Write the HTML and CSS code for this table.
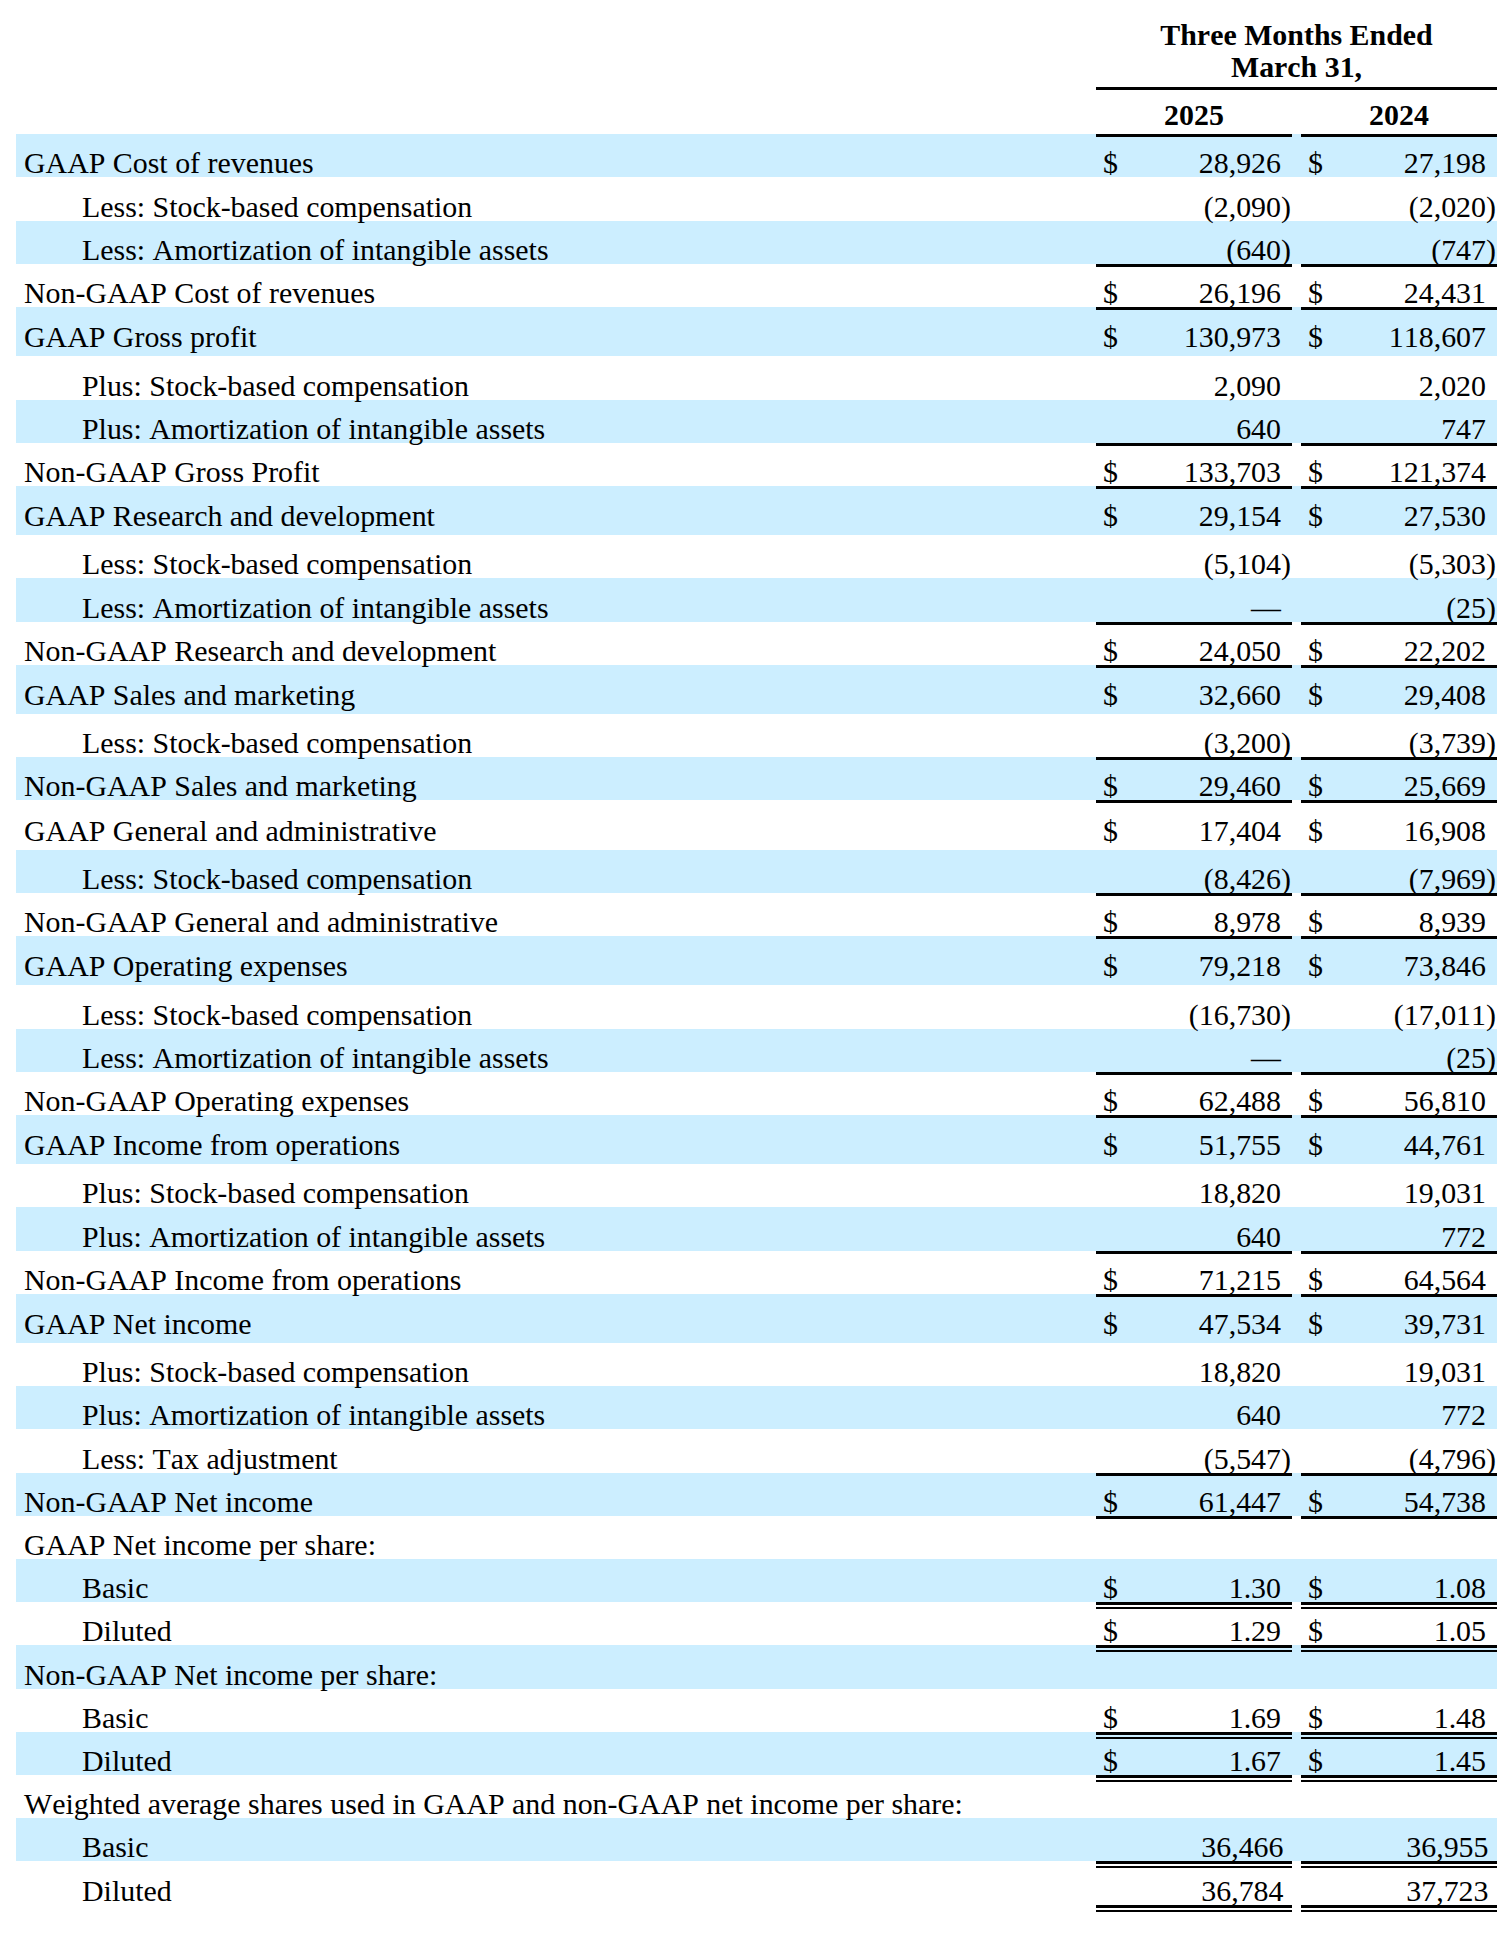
FILE: index.html
```html
<!DOCTYPE html>
<html lang="en">
<head>
<meta charset="utf-8">
<title>Non-GAAP Reconciliation</title>
<link rel="stylesheet" href="styles.css">
</head>
<body>
<div class="sheet">
  <div class="head">
    <div class="title">Three Months Ended<br>March 31,</div>
  </div>
  <div class="years">
    <div></div>
    <div class="yr">2025</div>
    <div class="yr">2024</div>
  </div>

  <div class="row alt">
    <div class="lbl">GAAP Cost of revenues</div>
    <div class="n t"><span class="c">$</span><span class="v">28,926</span><span class="p"></span></div>
    <div class="n t"><span class="c">$</span><span class="v">27,198</span><span class="p"></span></div>
  </div>
  <div class="row">
    <div class="lbl ind">Less: Stock-based compensation</div>
    <div class="n"><span class="c"></span><span class="v">(2,090</span><span class="p">)</span></div>
    <div class="n"><span class="c"></span><span class="v">(2,020</span><span class="p">)</span></div>
  </div>
  <div class="row alt">
    <div class="lbl ind">Less: Amortization of intangible assets</div>
    <div class="n"><span class="c"></span><span class="v">(640</span><span class="p">)</span></div>
    <div class="n"><span class="c"></span><span class="v">(747</span><span class="p">)</span></div>
  </div>
  <div class="row">
    <div class="lbl">Non-GAAP Cost of revenues</div>
    <div class="n t"><span class="c">$</span><span class="v">26,196</span><span class="p"></span></div>
    <div class="n t"><span class="c">$</span><span class="v">24,431</span><span class="p"></span></div>
  </div>

  <div class="row alt tall">
    <div class="lbl">GAAP Gross profit</div>
    <div class="n t"><span class="c">$</span><span class="v">130,973</span><span class="p"></span></div>
    <div class="n t"><span class="c">$</span><span class="v">118,607</span><span class="p"></span></div>
  </div>
  <div class="row">
    <div class="lbl ind">Plus: Stock-based compensation</div>
    <div class="n"><span class="c"></span><span class="v">2,090</span><span class="p"></span></div>
    <div class="n"><span class="c"></span><span class="v">2,020</span><span class="p"></span></div>
  </div>
  <div class="row alt">
    <div class="lbl ind">Plus: Amortization of intangible assets</div>
    <div class="n"><span class="c"></span><span class="v">640</span><span class="p"></span></div>
    <div class="n"><span class="c"></span><span class="v">747</span><span class="p"></span></div>
  </div>
  <div class="row">
    <div class="lbl">Non-GAAP Gross Profit</div>
    <div class="n t"><span class="c">$</span><span class="v">133,703</span><span class="p"></span></div>
    <div class="n t"><span class="c">$</span><span class="v">121,374</span><span class="p"></span></div>
  </div>

  <div class="row alt tall">
    <div class="lbl">GAAP Research and development</div>
    <div class="n t"><span class="c">$</span><span class="v">29,154</span><span class="p"></span></div>
    <div class="n t"><span class="c">$</span><span class="v">27,530</span><span class="p"></span></div>
  </div>
  <div class="row">
    <div class="lbl ind">Less: Stock-based compensation</div>
    <div class="n"><span class="c"></span><span class="v">(5,104</span><span class="p">)</span></div>
    <div class="n"><span class="c"></span><span class="v">(5,303</span><span class="p">)</span></div>
  </div>
  <div class="row alt">
    <div class="lbl ind">Less: Amortization of intangible assets</div>
    <div class="n"><span class="c"></span><span class="v">&mdash;</span><span class="p"></span></div>
    <div class="n"><span class="c"></span><span class="v">(25</span><span class="p">)</span></div>
  </div>
  <div class="row">
    <div class="lbl">Non-GAAP Research and development</div>
    <div class="n t"><span class="c">$</span><span class="v">24,050</span><span class="p"></span></div>
    <div class="n t"><span class="c">$</span><span class="v">22,202</span><span class="p"></span></div>
  </div>

  <div class="row alt tall">
    <div class="lbl">GAAP Sales and marketing</div>
    <div class="n t"><span class="c">$</span><span class="v">32,660</span><span class="p"></span></div>
    <div class="n t"><span class="c">$</span><span class="v">29,408</span><span class="p"></span></div>
  </div>
  <div class="row">
    <div class="lbl ind">Less: Stock-based compensation</div>
    <div class="n"><span class="c"></span><span class="v">(3,200</span><span class="p">)</span></div>
    <div class="n"><span class="c"></span><span class="v">(3,739</span><span class="p">)</span></div>
  </div>
  <div class="row alt">
    <div class="lbl">Non-GAAP Sales and marketing</div>
    <div class="n t"><span class="c">$</span><span class="v">29,460</span><span class="p"></span></div>
    <div class="n t"><span class="c">$</span><span class="v">25,669</span><span class="p"></span></div>
  </div>

  <div class="row tall">
    <div class="lbl">GAAP General and administrative</div>
    <div class="n t"><span class="c">$</span><span class="v">17,404</span><span class="p"></span></div>
    <div class="n t"><span class="c">$</span><span class="v">16,908</span><span class="p"></span></div>
  </div>
  <div class="row alt">
    <div class="lbl ind">Less: Stock-based compensation</div>
    <div class="n"><span class="c"></span><span class="v">(8,426</span><span class="p">)</span></div>
    <div class="n"><span class="c"></span><span class="v">(7,969</span><span class="p">)</span></div>
  </div>
  <div class="row">
    <div class="lbl">Non-GAAP General and administrative</div>
    <div class="n t"><span class="c">$</span><span class="v">8,978</span><span class="p"></span></div>
    <div class="n t"><span class="c">$</span><span class="v">8,939</span><span class="p"></span></div>
  </div>

  <div class="row alt tall">
    <div class="lbl">GAAP Operating expenses</div>
    <div class="n t"><span class="c">$</span><span class="v">79,218</span><span class="p"></span></div>
    <div class="n t"><span class="c">$</span><span class="v">73,846</span><span class="p"></span></div>
  </div>
  <div class="row">
    <div class="lbl ind">Less: Stock-based compensation</div>
    <div class="n"><span class="c"></span><span class="v">(16,730</span><span class="p">)</span></div>
    <div class="n"><span class="c"></span><span class="v">(17,011</span><span class="p">)</span></div>
  </div>
  <div class="row alt">
    <div class="lbl ind">Less: Amortization of intangible assets</div>
    <div class="n"><span class="c"></span><span class="v">&mdash;</span><span class="p"></span></div>
    <div class="n"><span class="c"></span><span class="v">(25</span><span class="p">)</span></div>
  </div>
  <div class="row">
    <div class="lbl">Non-GAAP Operating expenses</div>
    <div class="n t"><span class="c">$</span><span class="v">62,488</span><span class="p"></span></div>
    <div class="n t"><span class="c">$</span><span class="v">56,810</span><span class="p"></span></div>
  </div>

  <div class="row alt tall">
    <div class="lbl">GAAP Income from operations</div>
    <div class="n t"><span class="c">$</span><span class="v">51,755</span><span class="p"></span></div>
    <div class="n t"><span class="c">$</span><span class="v">44,761</span><span class="p"></span></div>
  </div>
  <div class="row">
    <div class="lbl ind">Plus: Stock-based compensation</div>
    <div class="n"><span class="c"></span><span class="v">18,820</span><span class="p"></span></div>
    <div class="n"><span class="c"></span><span class="v">19,031</span><span class="p"></span></div>
  </div>
  <div class="row alt">
    <div class="lbl ind">Plus: Amortization of intangible assets</div>
    <div class="n"><span class="c"></span><span class="v">640</span><span class="p"></span></div>
    <div class="n"><span class="c"></span><span class="v">772</span><span class="p"></span></div>
  </div>
  <div class="row">
    <div class="lbl">Non-GAAP Income from operations</div>
    <div class="n t"><span class="c">$</span><span class="v">71,215</span><span class="p"></span></div>
    <div class="n t"><span class="c">$</span><span class="v">64,564</span><span class="p"></span></div>
  </div>

  <div class="row alt tall">
    <div class="lbl">GAAP Net income</div>
    <div class="n t"><span class="c">$</span><span class="v">47,534</span><span class="p"></span></div>
    <div class="n t"><span class="c">$</span><span class="v">39,731</span><span class="p"></span></div>
  </div>
  <div class="row">
    <div class="lbl ind">Plus: Stock-based compensation</div>
    <div class="n"><span class="c"></span><span class="v">18,820</span><span class="p"></span></div>
    <div class="n"><span class="c"></span><span class="v">19,031</span><span class="p"></span></div>
  </div>
  <div class="row alt">
    <div class="lbl ind">Plus: Amortization of intangible assets</div>
    <div class="n"><span class="c"></span><span class="v">640</span><span class="p"></span></div>
    <div class="n"><span class="c"></span><span class="v">772</span><span class="p"></span></div>
  </div>
  <div class="row">
    <div class="lbl ind">Less: Tax adjustment</div>
    <div class="n"><span class="c"></span><span class="v">(5,547</span><span class="p">)</span></div>
    <div class="n"><span class="c"></span><span class="v">(4,796</span><span class="p">)</span></div>
  </div>
  <div class="row alt">
    <div class="lbl">Non-GAAP Net income</div>
    <div class="n t"><span class="c">$</span><span class="v">61,447</span><span class="p"></span></div>
    <div class="n t"><span class="c">$</span><span class="v">54,738</span><span class="p"></span></div>
  </div>

  <div class="row">
    <div class="lbl">GAAP Net income per share:</div>
    <div class="n t"></div>
    <div class="n t"></div>
  </div>
  <div class="row alt">
    <div class="lbl ind">Basic</div>
    <div class="n"><span class="c">$</span><span class="v">1.30</span><span class="p"></span></div>
    <div class="n"><span class="c">$</span><span class="v">1.08</span><span class="p"></span></div>
  </div>
  <div class="row">
    <div class="lbl ind">Diluted</div>
    <div class="n d"><span class="c">$</span><span class="v">1.29</span><span class="p"></span></div>
    <div class="n d"><span class="c">$</span><span class="v">1.05</span><span class="p"></span></div>
  </div>
  <div class="row alt">
    <div class="lbl">Non-GAAP Net income per share:</div>
    <div class="n d"></div>
    <div class="n d"></div>
  </div>
  <div class="row">
    <div class="lbl ind">Basic</div>
    <div class="n"><span class="c">$</span><span class="v">1.69</span><span class="p"></span></div>
    <div class="n"><span class="c">$</span><span class="v">1.48</span><span class="p"></span></div>
  </div>
  <div class="row alt">
    <div class="lbl ind">Diluted</div>
    <div class="n d"><span class="c">$</span><span class="v">1.67</span><span class="p"></span></div>
    <div class="n d"><span class="c">$</span><span class="v">1.45</span><span class="p"></span></div>
  </div>
  <div class="row">
    <div class="lbl">Weighted average shares used in GAAP and non-GAAP net income per share:</div>
    <div class="n d"></div>
    <div class="n d"></div>
  </div>
  <div class="row alt">
    <div class="lbl ind">Basic</div>
    <div class="n sh"><span class="c"></span><span class="v">36,466</span><span class="p"></span></div>
    <div class="n sh"><span class="c"></span><span class="v">36,955</span><span class="p"></span></div>
  </div>
  <div class="row">
    <div class="lbl ind">Diluted</div>
    <div class="n sh d"><span class="c"></span><span class="v">36,784</span><span class="p"></span></div>
    <div class="n sh d"><span class="c"></span><span class="v">37,723</span><span class="p"></span></div>
  </div>
  <div class="row foot">
    <div></div>
    <div class="n d"></div>
    <div class="n d"></div>
  </div>
</div>
</body>
</html>
```

FILE: styles.css
```css
html, body {
  margin: 0;
  padding: 0;
  background: #ffffff;
}

body {
  font-family: "Liberation Serif", "Times New Roman", serif;
  font-size: 29.9px;
  font-kerning: none;
  color: #000000;
}

.sheet {
  width: 1481px;
  margin-left: 16px;
}

.head,
.years,
.row {
  display: grid;
  grid-template-columns: 1fr 196px 196px;
  column-gap: 9px;
}

.title {
  grid-column: 2 / 4;
  text-align: center;
  font-weight: bold;
  line-height: 32px;
  padding: 18.65px 0 4.65px;
  border-bottom: 3px solid #000000;
}

.years {
  height: 44px;
  box-sizing: border-box;
  line-height: 28px;
  padding-bottom: 5.3px;
}

.yr {
  align-self: end;
  text-align: center;
  font-weight: bold;
}

.row {
  height: 43.2px;
  box-sizing: border-box;
  line-height: 28px;
}

.row.alt {
  background: #cceeff;
}

.row.tall {
  height: 49.3px;
  padding-bottom: 5px;
}

.row.foot {
  height: 10px;
}

.lbl {
  display: flex;
  align-items: flex-end;
  padding-left: 8px;
  white-space: nowrap;
}

.lbl.ind {
  padding-left: 66px;
}

.n {
  display: flex;
  align-items: flex-end;
  padding: 0 1px 0 7px;
  white-space: nowrap;
}

.c {
  flex: none;
}

.v {
  flex: 1;
  text-align: right;
}

.p {
  flex: none;
  width: 10px;
}

.n.sh .p {
  width: 7.5px;
}

.n.t {
  border-top: 3px solid #000000;
}

.n.d {
  background:
    linear-gradient(#000000, #000000) 0 0 / 100% 3px no-repeat,
    linear-gradient(#000000, #000000) 0 5px / 100% 2px no-repeat;
}
```
